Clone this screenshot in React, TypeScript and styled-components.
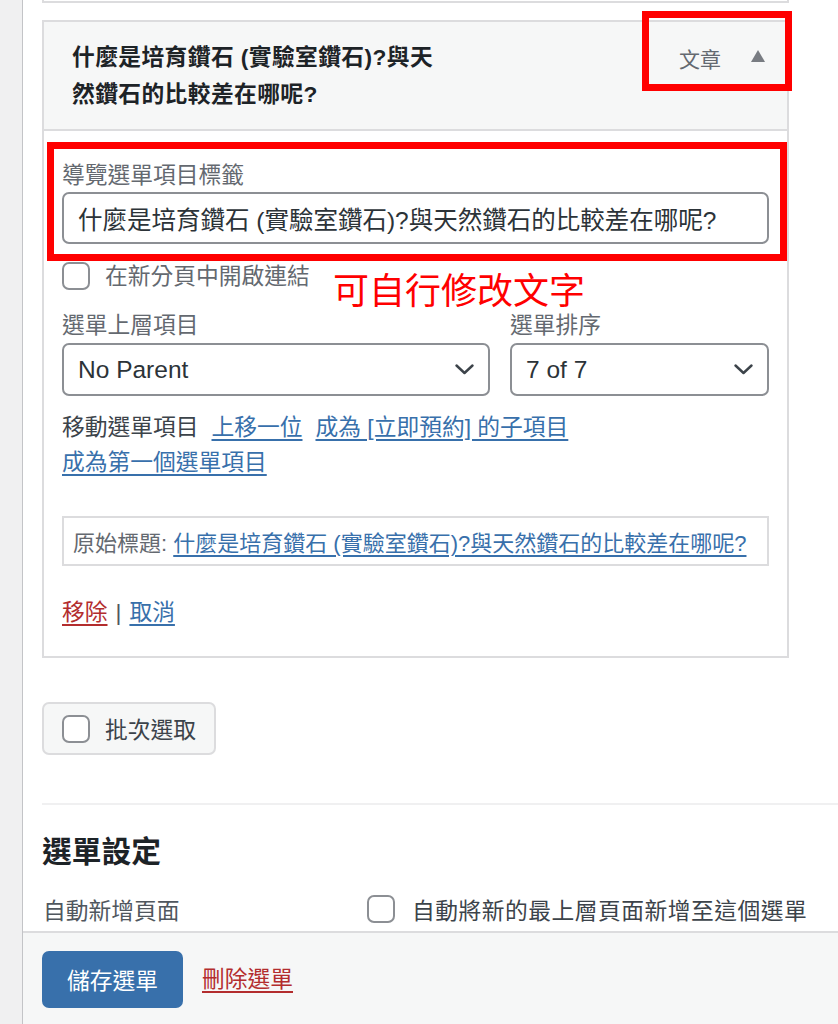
import styled, {createGlobalStyle} from "styled-components";

const GlobalStyle = createGlobalStyle`
  body {
    margin: 0;
    font-family: "Liberation Sans", "Noto Sans CJK TC", sans-serif;
    background: #ffffff;
  }
`

const moveLinks = ["上移一位", "成為 [立即預約] 的子項目", "成為第一個選單項目"]

export default function App() {
    return (
        <>
            <GlobalStyle/>
            <Page>
                <Sidebar/>
                <Main>
                    <Content>
                        <PrevItem/>
                        <MenuItem>
                            <ItemHandle>
                                <ItemTitle>什麼是培育鑽石 (實驗室鑽石)?與天然鑽石的比較差在哪呢?</ItemTitle>
                                <ItemControls>
                                    <ItemType>文章</ItemType>
                                    <ToggleArrow/>
                                </ItemControls>
                            </ItemHandle>
                            <ItemSettings>
                                <FieldLabel>導覽選單項目標籤</FieldLabel>
                                <TextInput defaultValue="什麼是培育鑽石 (實驗室鑽石)?與天然鑽石的比較差在哪呢?"/>
                                <CheckRow>
                                    <Checkbox type="checkbox"/>
                                    <span>在新分頁中開啟連結</span>
                                </CheckRow>
                                <SelectGrid>
                                    <FieldLabel>選單上層項目</FieldLabel>
                                    <FieldLabel>選單排序</FieldLabel>
                                    <SelectBox>
                                        <span>No Parent</span>
                                        <Chevron/>
                                    </SelectBox>
                                    <SelectBox>
                                        <span>7 of 7</span>
                                        <Chevron/>
                                    </SelectBox>
                                </SelectGrid>
                                <MoveRow>
                                    <span>移動選單項目</span>
                                    {moveLinks.map(link => <BlueLink key={link} href="#">{link}</BlueLink>)}
                                </MoveRow>
                                <OriginalBox>
                                    原始標題:&nbsp;
                                    <BlueLink href="#">什麼是培育鑽石 (實驗室鑽石)?與天然鑽石的比較差在哪呢?</BlueLink>
                                </OriginalBox>
                                <ActionRow>
                                    <RedLink href="#">移除</RedLink>
                                    <Separator>|</Separator>
                                    <BlueLink href="#">取消</BlueLink>
                                </ActionRow>
                            </ItemSettings>

                            <MarkBox $left={600} $top={-9} $width={150} $height={80}/>
                            <MarkBox $left={5} $top={122} $width={740} $height={119}/>
                            <MarkNote>可自行修改文字</MarkNote>
                        </MenuItem>

                        <BatchButton>
                            <Checkbox type="checkbox"/>
                            <span>批次選取</span>
                        </BatchButton>

                        <Divider/>

                        <SettingsHeading>選單設定</SettingsHeading>
                        <SettingsRow>
                            <SettingsLabel>自動新增頁面</SettingsLabel>
                            <SettingsValue>
                                <Checkbox type="checkbox"/>
                                <span>自動將新的最上層頁面新增至這個選單</span>
                            </SettingsValue>
                        </SettingsRow>
                    </Content>

                    <Footer>
                        <SaveButton>儲存選單</SaveButton>
                        <RedLink href="#">刪除選單</RedLink>
                    </Footer>
                </Main>
            </Page>
        </>
    )
}

function Chevron() {
    return (
        <svg width="19" height="11" viewBox="0 0 19 11" fill="none">
            <path d="M1.5 1.5 L9.5 9 L17.5 1.5" stroke="#3c434a" strokeWidth="2.4" strokeLinecap="round"
                  strokeLinejoin="round"/>
        </svg>
    )
}

const Page = styled.div`
  display: flex;
  min-height: 1024px;
  width: 838px;
  overflow: hidden;
`

const Sidebar = styled.div`
  width: 22px;
  flex-shrink: 0;
  background: #f0f0f1;
  border-right: 1px solid #c3c4c7;
`

const Main = styled.div`
  flex: 1;
  display: flex;
  flex-direction: column;
  background: #ffffff;
`

const Content = styled.div`
  display: flex;
  flex-direction: column;
  padding-left: 19px;
`

const PrevItem = styled.div`
  width: 747px;
  height: 3px;
  box-sizing: border-box;
  border: 2px solid #dcdcde;
  border-top: none;
`

const MenuItem = styled.div`
  position: relative;
  width: 747px;
  margin-top: 17px;
`

const ItemHandle = styled.div`
  display: flex;
  justify-content: space-between;
  align-items: flex-start;
  padding: 17px 22px 16px 28px;
  background: #f6f7f7;
  border: 2px solid #dcdcde;
`

const ItemTitle = styled.div`
  width: 366px;
  font-size: 22.75px;
  font-weight: 600;
  line-height: 37px;
  letter-spacing: 0.4px;
  color: #1d2327;
`

const ItemControls = styled.div`
  display: flex;
  align-items: center;
  gap: 30px;
  height: 37px;
`

const ItemType = styled.span`
  font-size: 21px;
  color: #646970;
`

const ToggleArrow = styled.span`
  width: 0;
  height: 0;
  border-left: 7px solid transparent;
  border-right: 7px solid transparent;
  border-bottom: 12px solid #787c82;
  margin-top: -3px;
`

const ItemSettings = styled.div`
  display: flex;
  flex-direction: column;
  padding: 28px 18px;
  border: 2px solid #dcdcde;
  border-top: none;
  font-size: 22.75px;
`

const FieldLabel = styled.label`
  display: block;
  font-size: 22.75px;
  line-height: 32px;
  color: #646970;
`

const TextInput = styled.input`
  margin-top: 1px;
  height: 52px;
  box-sizing: border-box;
  padding: 0 14px;
  border: 2px solid #8c8f94;
  border-radius: 7px;
  font-family: inherit;
  font-size: 24.5px;
  color: #2c3338;
  outline: none;
`

const Checkbox = styled.input`
  appearance: none;
  margin: 0;
  width: 28px;
  height: 28px;
  flex-shrink: 0;
  box-sizing: border-box;
  border: 2px solid #8c8f94;
  border-radius: 7px;
  background: #ffffff;
`

const CheckRow = styled.div`
  display: flex;
  align-items: center;
  gap: 15px;
  margin-top: 18px;
  font-size: 22.75px;
  line-height: 28px;
  color: #646970;
`

const SelectGrid = styled.div`
  display: grid;
  grid-template-columns: 428px 1fr;
  column-gap: 20px;
  margin-top: 19px;
`

const SelectBox = styled.div`
  display: flex;
  align-items: center;
  justify-content: space-between;
  height: 53px;
  box-sizing: border-box;
  margin-top: 2px;
  padding: 0 14px 0 14px;
  border: 2px solid #8c8f94;
  border-radius: 7px;
  font-size: 24.5px;
  color: #2c3338;
`

const MoveRow = styled.div`
  display: flex;
  flex-wrap: wrap;
  column-gap: 13px;
  margin-top: 14px;
  line-height: 35px;
  color: #3c434a;
`

const BlueLink = styled.a`
  color: #3870ab;
  text-decoration: underline;
  text-underline-offset: 4px;
  white-space: nowrap;
`

const RedLink = styled.a`
  color: #b32d2e;
  text-decoration: underline;
  text-underline-offset: 4px;
`

const OriginalBox = styled.div`
  display: flex;
  align-items: center;
  height: 50px;
  box-sizing: border-box;
  margin-top: 36px;
  padding: 0 9px;
  border: 2px solid #dcdcde;
  font-size: 22px;
  color: #646970;
`

const ActionRow = styled.div`
  margin-top: 30px;
  line-height: 32px;
`

const Separator = styled.span`
  margin: 0 8px;
  color: #50575e;
`

const MarkBox = styled.div<{ $left: number; $top: number; $width: number; $height: number }>`
  position: absolute;
  left: ${p => p.$left}px;
  top: ${p => p.$top}px;
  width: ${p => p.$width}px;
  height: ${p => p.$height}px;
  box-sizing: border-box;
  border: 7px solid #ff0000;
  pointer-events: none;
`

const MarkNote = styled.div`
  position: absolute;
  left: 291px;
  top: 250px;
  font-size: 36px;
  line-height: 44px;
  color: #ff0000;
`

const BatchButton = styled.div`
  display: flex;
  align-items: center;
  align-self: flex-start;
  gap: 15px;
  height: 53px;
  box-sizing: border-box;
  margin-top: 44px;
  padding: 0 18px;
  background: #f6f7f7;
  border: 2px solid #dcdcde;
  border-radius: 7px;
  font-size: 22.75px;
  color: #3c434a;
`

const Divider = styled.div`
  margin-top: 48px;
  border-top: 2px solid #f0f0f1;
`

const SettingsHeading = styled.h2`
  margin: 27px 0 0;
  font-size: 29.75px;
  font-weight: 600;
  line-height: 40px;
  color: #1d2327;
`

const SettingsRow = styled.div`
  display: flex;
  align-items: center;
  margin-top: 21px;
  margin-bottom: 6px;
  height: 32px;
  font-size: 22.75px;
`

const SettingsLabel = styled.span`
  width: 324px;
  padding-left: 1px;
  color: #50575e;
`

const SettingsValue = styled.label`
  display: flex;
  align-items: center;
  gap: 17px;
  color: #3c434a;
  letter-spacing: 0.5px;
`

const Footer = styled.div`
  flex: 1;
  display: flex;
  align-items: flex-start;
  gap: 19px;
  padding: 18px 0 0 19px;
  background: #f6f7f7;
  border-top: 2px solid #dcdcde;
  font-size: 22.75px;
  line-height: 57px;
`

const SaveButton = styled.button`
  height: 57px;
  padding: 0 25px;
  border: none;
  border-radius: 7px;
  background: #3870ab;
  font-family: inherit;
  font-size: 22.75px;
  color: #ffffff;
`
